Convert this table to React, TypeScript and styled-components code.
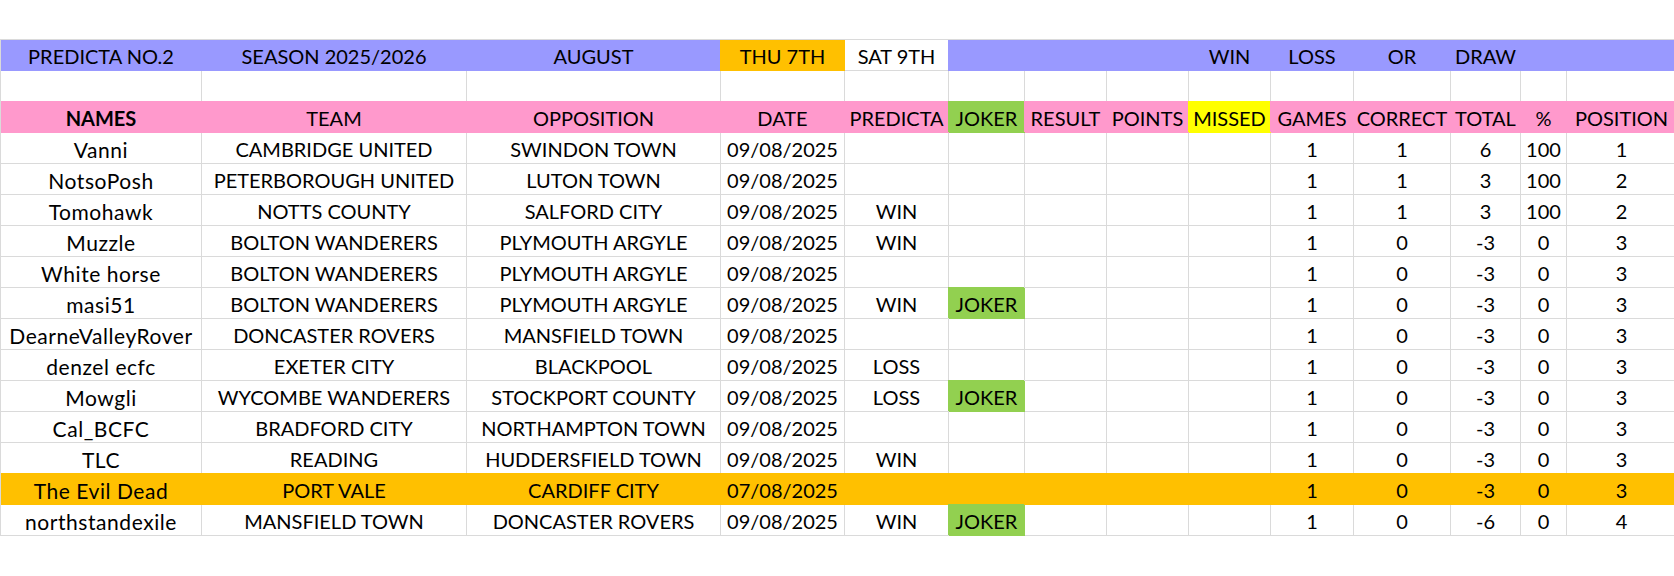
import { FunctionComponent } from "react";
import styled, { createGlobalStyle } from "styled-components";

const LINE = "#dadada";
const PURPLE = "#9999ff";
const PINK = "#ff99cc";
const ORANGE = "#ffc000";
const GREEN = "#92d050";
const YELLOW = "#ffff00";

const GlobalStyle = createGlobalStyle`
  body {
    margin: 0;
    background: #ffffff;
  }
`;

const Page = styled.div`
  width: 1674px;
  height: 576px;
  overflow: hidden;
  padding-top: 39px;
  box-sizing: border-box;
  background: #ffffff;
  font-family: Lato, "Liberation Sans", sans-serif;
  font-size: 20px;
  color: #000000;
`;

const Sheet = styled.div`
  display: grid;
  grid-template-columns: 201px 265px 254px 124px 104px 76px 82px 82px 82px 83px 97px 70px 46px 110px;
  grid-auto-rows: 31px;
  width: max-content;
  border-top: 1px solid ${LINE};
  border-left: 1px solid ${LINE};
`;

const Row = styled.div`
  display: contents;
`;

const Cell = styled.div<{ $fill?: string; $bold?: boolean }>`
  display: flex;
  align-items: flex-end;
  justify-content: center;
  padding: 0 2px 2px;
  box-sizing: border-box;
  white-space: nowrap;
  line-height: 24px;
  font-weight: ${(p) => (p.$bold ? 700 : 400)};
  background: ${(p) => p.$fill ?? "#ffffff"};
  border-right: 1px solid ${(p) => p.$fill ?? LINE};
  border-bottom: 1px solid ${(p) => p.$fill ?? LINE};
  box-shadow: ${(p) => (p.$fill ? `-1px -1px 0 0 ${p.$fill}` : "none")};

  &:first-child {
    box-shadow: ${(p) => (p.$fill ? `0 -1px 0 0 ${p.$fill}` : "none")};
  }
`;

/* mixed-case names: Calibri's lower case runs wider than Lato's */
const NameCell = styled(Cell)`
  font-size: 21px;
  letter-spacing: 0.55px;
  padding-bottom: 1px;
`;

const TitleCell = styled(Cell)`
  box-shadow: ${(p) => (p.$fill ? `-1px 0 0 0 ${p.$fill}` : "none")};

  &:first-child {
    box-shadow: none;
  }
`;

type Player = {
  name: string;
  team: string;
  opp: string;
  date: string;
  pick?: string;
  joker?: boolean;
  correct: number;
  total: number;
  pct: number;
  pos: number;
  hot?: boolean;
};

const players: Player[] = [
  { name: "Vanni", team: "CAMBRIDGE UNITED", opp: "SWINDON TOWN", date: "09/08/2025", correct: 1, total: 6, pct: 100, pos: 1 },
  { name: "NotsoPosh", team: "PETERBOROUGH UNITED", opp: "LUTON TOWN", date: "09/08/2025", correct: 1, total: 3, pct: 100, pos: 2 },
  { name: "Tomohawk", team: "NOTTS COUNTY", opp: "SALFORD CITY", date: "09/08/2025", pick: "WIN", correct: 1, total: 3, pct: 100, pos: 2 },
  { name: "Muzzle", team: "BOLTON WANDERERS", opp: "PLYMOUTH ARGYLE", date: "09/08/2025", pick: "WIN", correct: 0, total: -3, pct: 0, pos: 3 },
  { name: "White horse", team: "BOLTON WANDERERS", opp: "PLYMOUTH ARGYLE", date: "09/08/2025", correct: 0, total: -3, pct: 0, pos: 3 },
  { name: "masi51", team: "BOLTON WANDERERS", opp: "PLYMOUTH ARGYLE", date: "09/08/2025", pick: "WIN", joker: true, correct: 0, total: -3, pct: 0, pos: 3 },
  { name: "DearneValleyRover", team: "DONCASTER ROVERS", opp: "MANSFIELD TOWN", date: "09/08/2025", correct: 0, total: -3, pct: 0, pos: 3 },
  { name: "denzel ecfc", team: "EXETER CITY", opp: "BLACKPOOL", date: "09/08/2025", pick: "LOSS", correct: 0, total: -3, pct: 0, pos: 3 },
  { name: "Mowgli", team: "WYCOMBE WANDERERS", opp: "STOCKPORT COUNTY", date: "09/08/2025", pick: "LOSS", joker: true, correct: 0, total: -3, pct: 0, pos: 3 },
  { name: "Cal_BCFC", team: "BRADFORD CITY", opp: "NORTHAMPTON TOWN", date: "09/08/2025", correct: 0, total: -3, pct: 0, pos: 3 },
  { name: "TLC", team: "READING", opp: "HUDDERSFIELD TOWN", date: "09/08/2025", pick: "WIN", correct: 0, total: -3, pct: 0, pos: 3 },
  { name: "The Evil Dead", team: "PORT VALE", opp: "CARDIFF CITY", date: "07/08/2025", correct: 0, total: -3, pct: 0, pos: 3, hot: true },
  { name: "northstandexile", team: "MANSFIELD TOWN", opp: "DONCASTER ROVERS", date: "09/08/2025", pick: "WIN", joker: true, correct: 0, total: -6, pct: 0, pos: 4 },
];

const titles: { text: string; fill?: string }[] = [
  { text: "PREDICTA NO.2", fill: PURPLE },
  { text: "SEASON 2025/2026", fill: PURPLE },
  { text: "AUGUST", fill: PURPLE },
  { text: "THU 7TH", fill: ORANGE },
  { text: "SAT 9TH" },
  { text: "", fill: PURPLE },
  { text: "", fill: PURPLE },
  { text: "", fill: PURPLE },
  { text: "WIN", fill: PURPLE },
  { text: "LOSS", fill: PURPLE },
  { text: "OR", fill: PURPLE },
  { text: "DRAW", fill: PURPLE },
  { text: "", fill: PURPLE },
  { text: "", fill: PURPLE },
];

const headings: { text: string; fill: string }[] = [
  { text: "NAMES", fill: PINK },
  { text: "TEAM", fill: PINK },
  { text: "OPPOSITION", fill: PINK },
  { text: "DATE", fill: PINK },
  { text: "PREDICTA", fill: PINK },
  { text: "JOKER", fill: GREEN },
  { text: "RESULT", fill: PINK },
  { text: "POINTS", fill: PINK },
  { text: "MISSED", fill: YELLOW },
  { text: "GAMES", fill: PINK },
  { text: "CORRECT", fill: PINK },
  { text: "TOTAL", fill: PINK },
  { text: "%", fill: PINK },
  { text: "POSITION", fill: PINK },
];

const App: FunctionComponent = () => {
  return (
    <Page>
      <GlobalStyle />
      <Sheet>
        <Row>
          {titles.map((t, i) => (
            <TitleCell key={i} $fill={t.fill}>
              {t.text}
            </TitleCell>
          ))}
        </Row>
        <Row>
          {headings.map((_, i) => (
            <Cell key={i} />
          ))}
        </Row>
        <Row>
          {headings.map((h, i) => (
            <Cell key={i} $fill={h.fill} $bold={i === 0}>
              {h.text}
            </Cell>
          ))}
        </Row>
        {players.map((p) => {
          const row = p.hot ? ORANGE : undefined;
          return (
            <Row key={p.name}>
              <NameCell $fill={row}>{p.name}</NameCell>
              <Cell $fill={row}>{p.team}</Cell>
              <Cell $fill={row}>{p.opp}</Cell>
              <Cell $fill={row}>{p.date}</Cell>
              <Cell $fill={row}>{p.pick}</Cell>
              <Cell $fill={p.joker ? GREEN : row}>{p.joker ? "JOKER" : ""}</Cell>
              <Cell $fill={row} />
              <Cell $fill={row} />
              <Cell $fill={row} />
              <Cell $fill={row}>1</Cell>
              <Cell $fill={row}>{p.correct}</Cell>
              <Cell $fill={row}>{p.total}</Cell>
              <Cell $fill={row}>{p.pct}</Cell>
              <Cell $fill={row}>{p.pos}</Cell>
            </Row>
          );
        })}
      </Sheet>
    </Page>
  );
};

export default App;
